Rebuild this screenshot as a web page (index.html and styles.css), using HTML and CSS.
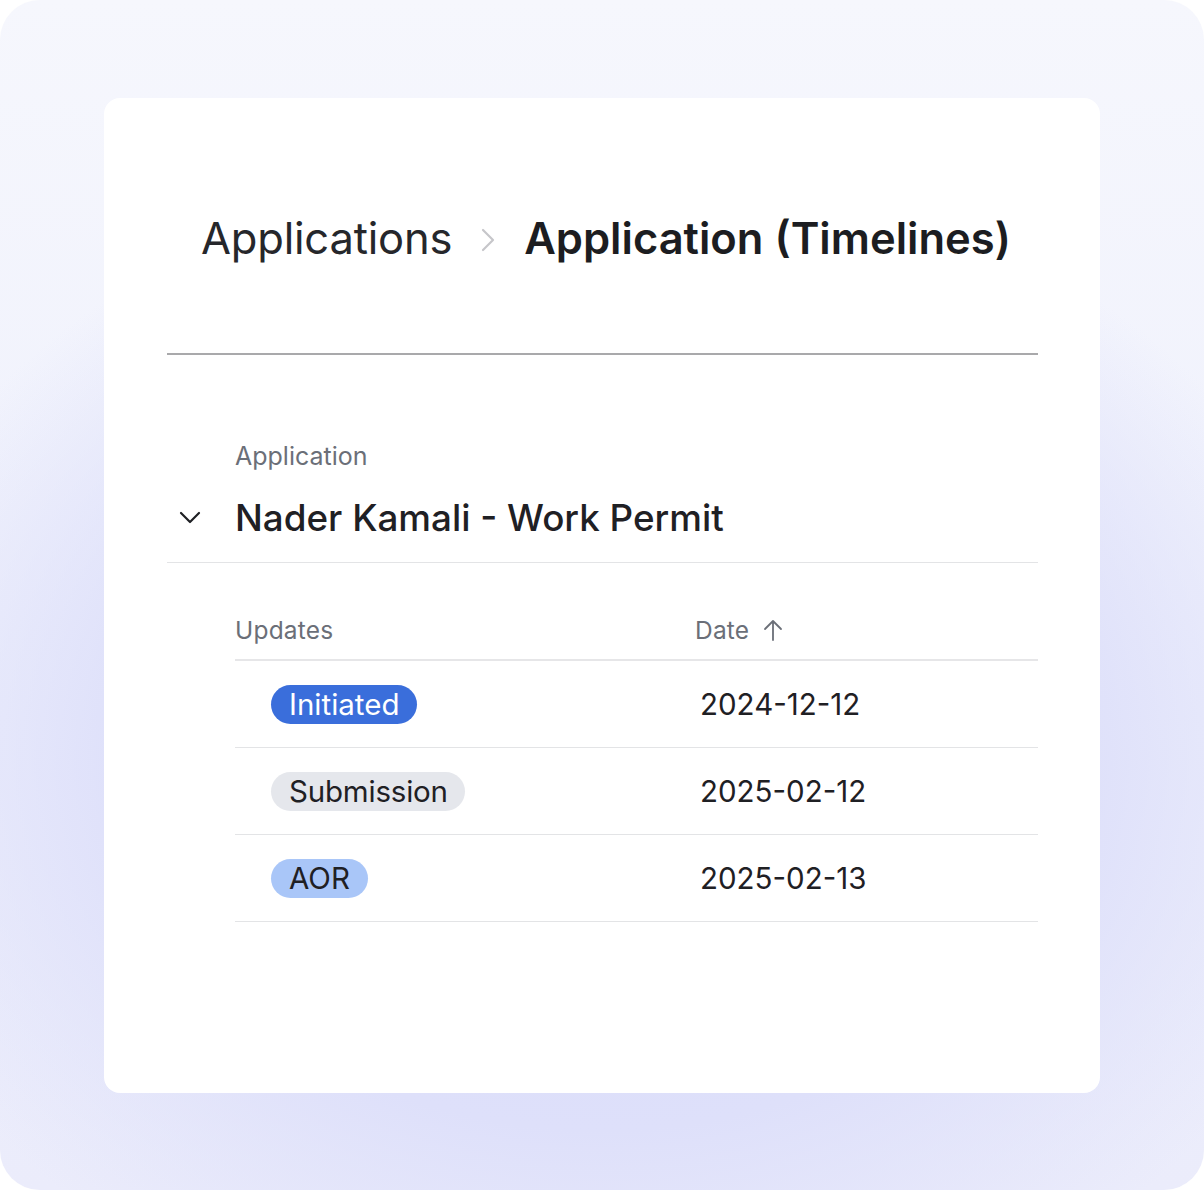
FILE: index.html
```html
<!DOCTYPE html>
<html lang="en">
<head>
    <meta charset="UTF-8">
    <meta name="viewport" content="width=device-width, initial-scale=1.0">
    <title>Application (Timelines)</title>
    <link rel="stylesheet" href="styles.css">
</head>
<body>
    <div class="frame">
        <div class="card">
            <div class="breadcrumb">
                <span class="crumb">Applications</span>
                <svg class="crumb-sep" width="18" height="26" viewBox="0 0 18 26">
                    <path d="M4 3 L14 13 L4 23" fill="none" stroke="#c6c6ca" stroke-width="2.2" stroke-linecap="round" stroke-linejoin="round"/>
                </svg>
                <span class="crumb current">Application (Timelines)</span>
            </div>

            <hr class="divider">

            <div class="app-head">
                <div class="app-label">Application</div>
                <div class="app-title">
                    <svg class="toggle" width="22" height="14" viewBox="0 0 22 14">
                        <path d="M2 2 L11 11 L20 2" fill="none" stroke="#1f2024" stroke-width="2.2" stroke-linecap="round" stroke-linejoin="round"/>
                    </svg>
                    <span>Nader Kamali - Work Permit</span>
                </div>
            </div>

            <div class="updates">
                <div class="row head">
                    <div class="cell">Updates</div>
                    <div class="cell date-head">
                        Date
                        <svg width="20" height="24" viewBox="0 0 20 24">
                            <path d="M10 22 V3 M2 11 L10 3 L18 11" fill="none" stroke="#6b6f78" stroke-width="1.8" stroke-linecap="round" stroke-linejoin="round"/>
                        </svg>
                    </div>
                </div>
                <div class="row">
                    <div class="cell"><span class="badge blue">Initiated</span></div>
                    <div class="cell date">2024-12-12</div>
                </div>
                <div class="row">
                    <div class="cell"><span class="badge grey">Submission</span></div>
                    <div class="cell date">2025-02-12</div>
                </div>
                <div class="row">
                    <div class="cell"><span class="badge light">AOR</span></div>
                    <div class="cell date">2025-02-13</div>
                </div>
            </div>
        </div>
    </div>
</body>
</html>
```

FILE: styles.css
```css
html, body {
    margin: 0;
    padding: 0;
    background: #ffffff;
}
body {
    font-family: Inter, "Noto Sans", Arial, sans-serif;
    color: #1f2024;
}
.frame {
    width: 1204px;
    height: 1190px;
    box-sizing: border-box;
    padding: 98px 104px 0 104px;
    border-radius: 40px;
    overflow: hidden;
    background:
        radial-gradient(ellipse 78% 62% at 50% 64%, #d8dbfa 0%, #dee0fa 50%, rgba(236,238,252,0) 82%),
        linear-gradient(180deg, #f6f7fd 0%, #eef0fc 60%, #ebecfb 100%);
}
.card {
    width: 996px;
    height: 995px;
    box-sizing: border-box;
    background: #ffffff;
    border-radius: 16px;
    padding: 114px 62px 0 63px;
}
.breadcrumb {
    display: flex;
    align-items: center;
    gap: 27px;
    padding-left: 34px;
    height: 53px;
}
.crumb {
    font-size: 43.5px;
    line-height: 53px;
    color: #26272b;
    letter-spacing: -0.2px;
}
.crumb.current {
    font-weight: 600;
    color: #1c1d21;
    letter-spacing: 0;
}
.crumb-sep {
    margin-top: 2px;
}
.divider {
    margin: 88px 0 0 0;
    border: none;
    height: 2px;
    background: #a9a9ab;
}
.app-head {
    margin-top: 86px;
    border-bottom: 1px solid #e3e4e6;
    padding-bottom: 21px;
}
.app-label {
    padding-left: 68px;
    font-size: 25px;
    line-height: 30px;
    color: #6b6f78;
}
.app-title {
    display: flex;
    align-items: center;
    margin-top: 24px;
    font-size: 36.8px;
    line-height: 46px;
    font-weight: 500;
    color: #1f2024;
}
.toggle {
    width: 22px;
    margin-left: 12px;
    margin-right: 34px;
}
.updates {
    margin-left: 68px;
    margin-top: 53px;
}
.row {
    display: grid;
    grid-template-columns: 460px 1fr;
    align-items: center;
    box-sizing: border-box;
    height: 87px;
    border-bottom: 1px solid #e3e4e6;
}
.row.head {
    height: 45px;
    align-items: start;
    border-bottom-width: 2px;
    border-bottom-color: #e6e6e8;
}
.head .cell {
    font-size: 24.5px;
    line-height: 28px;
    color: #6b6f78;
    letter-spacing: 0.2px;
}
.date-head {
    display: flex;
    align-items: center;
    gap: 14px;
}
.badge {
    display: inline-block;
    margin-left: 36px;
    padding: 0 18px;
    height: 39px;
    line-height: 39px;
    border-radius: 20px;
    font-size: 29.5px;
    color: #1f2024;
}
.badge.blue {
    background: #3a6edb;
    color: #ffffff;
}
.badge.grey {
    background: #e5e7ec;
    padding: 0 17px 0 18px;
    letter-spacing: -0.2px;
}
.badge.light {
    background: #a9c6f8;
}
.date {
    padding-left: 5px;
    font-size: 29.5px;
    letter-spacing: 0;
    color: #1f2024;
}
```
